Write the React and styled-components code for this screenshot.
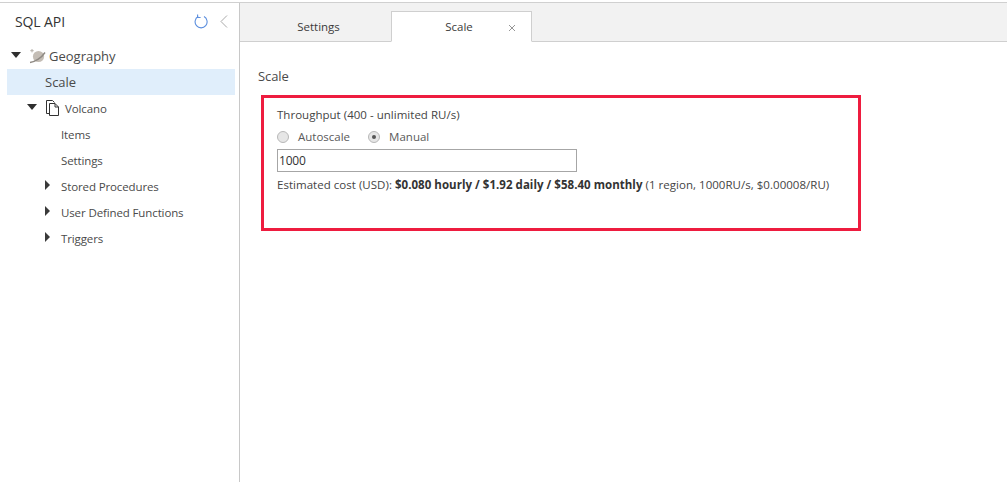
import React from 'react';
import styled, { createGlobalStyle } from 'styled-components';

const GlobalStyle = createGlobalStyle`
  html, body {
    margin: 0;
    padding: 0;
    height: 100%;
    background: #fff;
  }
  body {
    font-family: 'Open Sans', 'Noto Sans', Arial, sans-serif;
    color: #444;
    overflow: hidden;
  }
`;

const Page = styled.div`
  width: 1007px;
  height: 482px;
  box-sizing: border-box;
  padding-top: 2px;
  display: flex;
  background: #fff;
`;

const Frame = styled.div`
  flex: 1;
  display: flex;
  border-top: 1px solid #d0d0d0;
`;

const Sidebar = styled.aside`
  width: 240px;
  flex: none;
  box-sizing: border-box;
  border-right: 1px solid #c8c8c8;
  padding: 0 4px 0 7px;
`;

const SidebarHeader = styled.header`
  height: 39px;
  box-sizing: border-box;
  display: flex;
  align-items: center;
  padding: 0 7px 3px 8px;
`;

const SidebarTitle = styled.h1`
  flex: 1;
  margin: 0;
  font-size: 14px;
  font-weight: 400;
  letter-spacing: -0.1px;
  color: #333;
`;

const HeaderIcon = styled.svg`
  display: block;
  margin-left: ${({ $gap }) => $gap || 0}px;
`;

const Tree = styled.div`
  margin-top: 1px;
  display: flex;
  flex-direction: column;
`;

const TreeRow = styled.div`
  height: 26px;
  display: flex;
  align-items: center;
  padding-left: ${({ $indent }) => $indent}px;
  background: ${({ $selected }) => ($selected ? '#e0eefb' : 'transparent')};
  font-size: ${({ $large }) => ($large ? 13 : 11.5)}px;
  letter-spacing: ${({ $large }) => ($large ? 0 : -0.12)}px;
  color: #4a4a4a;
`;

const Caret = styled.svg`
  flex: none;
  display: block;
  margin-right: ${({ $gap }) => $gap}px;
  margin-bottom: 3px;
`;

const RowIcon = styled.svg`
  flex: none;
  display: block;
  margin-right: ${({ $gap }) => $gap}px;
`;

const Main = styled.main`
  flex: 1;
  min-width: 0;
  display: flex;
  flex-direction: column;
`;

const TabBar = styled.div`
  height: 39px;
  box-sizing: border-box;
  flex: none;
  display: flex;
  align-items: flex-end;
  background: #f2f2f2;
  border-bottom: 1px solid #cfcfcf;
  padding-left: 11px;
`;

const Tab = styled.div`
  position: relative;
  width: ${({ $width }) => $width}px;
  height: 31px;
  box-sizing: border-box;
  display: flex;
  align-items: center;
  justify-content: center;
  padding-right: 5px;
  font-size: 11.5px;
  letter-spacing: 0;
  color: #3a3a3a;
  margin-bottom: -1px;
  ${({ $active }) =>
    $active
      ? `background: #fff;
         border: 1px solid #cfcfcf;
         border-bottom: 1px solid #fff;`
      : ''}
`;

const TabClose = styled.svg`
  position: absolute;
  right: 15px;
  top: 12px;
`;

const Content = styled.section`
  padding: 26px 0 0 18px;
`;

const PaneTitle = styled.h2`
  margin: 0;
  font-size: 13px;
  line-height: 17px;
  font-weight: 400;
  letter-spacing: -0.1px;
  color: #4a4a4a;
`;

const Highlight = styled.div`
  width: 600px;
  height: 136px;
  box-sizing: border-box;
  margin: 10px 0 0 3px;
  border: 3px solid #ee1c3f;
  padding: 9px 13px;
`;

const Label = styled.div`
  font-size: 11.5px;
  line-height: 15px;
  letter-spacing: 0.02px;
  color: #444;
`;

const RadioRow = styled.div`
  display: flex;
  align-items: center;
  height: 15px;
  margin-top: 7px;
  font-size: 11.5px;
  color: #5a5a5a;
`;

const Radio = styled.span`
  width: 12px;
  height: 12px;
  box-sizing: border-box;
  flex: none;
  border-radius: 50%;
  border: 1px solid #b8b8b8;
  background: #e6e6e6;
  display: flex;
  align-items: center;
  justify-content: center;
  margin-right: 9px;
  &::after {
    content: '';
    display: ${({ $checked }) => ($checked ? 'block' : 'none')};
    width: 4px;
    height: 4px;
    border-radius: 50%;
    background: #555;
  }
`;

const RadioText = styled.span`
  margin-right: ${({ $gap }) => $gap || 0}px;
`;

const ThroughputInput = styled.div`
  width: 300px;
  height: 23px;
  box-sizing: border-box;
  margin-top: 5px;
  border: 1px solid #a6a6a6;
  padding-left: 1px;
  font-size: 12px;
  line-height: 21px;
  letter-spacing: -0.2px;
  color: #333;
`;

const Cost = styled.div`
  margin-top: 5px;
  font-size: 11.5px;
  line-height: 15px;
  letter-spacing: 0.03px;
  color: #444;
  white-space: nowrap;
  strong {
    font-weight: 700;
    color: #333;
  }
`;

const CaretDown = ({ gap }) => (
  <Caret $gap={gap} width="10" height="6" viewBox="0 0 10 6">
    <path d="M0 0h10L5 6z" fill="#2f2f2f" />
  </Caret>
);

const CaretRight = () => (
  <Caret $gap={11} width="5" height="10" viewBox="0 0 5 10">
    <path d="M0 0l5 5-5 5z" fill="#3a3a3a" />
  </Caret>
);

const PlanetIcon = () => (
  <RowIcon $gap={3} width="17" height="16" viewBox="0 0 17 16">
    <circle cx="9.5" cy="8.5" r="5.6" fill="#c4bdb5" />
    <path d="M1 14.5C5.5 14 12.5 10 16 4.5" stroke="#8f8a84" strokeWidth="1.4" fill="none" />
    <path d="M3 1v3.4M1.3 2.7h3.4" stroke="#b5b0aa" strokeWidth="1" />
  </RowIcon>
);

const DocsIcon = () => (
  <RowIcon $gap={5} width="14" height="16" viewBox="0 0 14 16">
    <path d="M3.5 13.5H.5V.5h6l2 2" fill="none" stroke="#333" />
    <path d="M3.5 3.5h5.5l3.5 3.5v8.5h-9z" fill="#fff" stroke="#333" />
    <path d="M9 3.5V7h3.5" fill="none" stroke="#333" />
  </RowIcon>
);

export default function App() {
  return (
    <>
      <GlobalStyle />
      <Page>
        <Frame>
          <Sidebar>
            <SidebarHeader>
              <SidebarTitle>SQL API</SidebarTitle>
              <HeaderIcon width="14" height="15" viewBox="0 0 14 15">
                <path
                  d="M4.2 2.6A6 6 0 1 0 10 2.6"
                  fill="none"
                  stroke="#5b8ede"
                  strokeWidth="1.1"
                />
                <path d="M3.6 0.5v3h3" fill="none" stroke="#5b8ede" strokeWidth="1.1" />
              </HeaderIcon>
              <HeaderIcon $gap={12} width="8" height="13" viewBox="0 0 8 13">
                <path d="M7 .5L1 6.5l6 6" fill="none" stroke="#a9a9a9" strokeWidth="1" />
              </HeaderIcon>
            </SidebarHeader>
            <Tree>
              <TreeRow $indent={4} $large>
                <CaretDown gap={8} />
                <PlanetIcon />
                Geography
              </TreeRow>
              <TreeRow $indent={38} $selected $large>Scale</TreeRow>
              <TreeRow $indent={20}>
                <CaretDown gap={9} />
                <DocsIcon />
                Volcano
              </TreeRow>
              <TreeRow $indent={54}>Items</TreeRow>
              <TreeRow $indent={54}>Settings</TreeRow>
              <TreeRow $indent={38}>
                <CaretRight />
                Stored Procedures
              </TreeRow>
              <TreeRow $indent={38}>
                <CaretRight />
                User Defined Functions
              </TreeRow>
              <TreeRow $indent={38}>
                <CaretRight />
                Triggers
              </TreeRow>
            </Tree>
          </Sidebar>
          <Main>
            <TabBar>
              <Tab $width={140}>Settings</Tab>
              <Tab $width={141} $active>
                Scale
                <TabClose width="8" height="8" viewBox="0 0 8 8">
                  <path d="M1 1l6 6M7 1L1 7" stroke="#8a8a8a" strokeWidth="0.9" />
                </TabClose>
              </Tab>
            </TabBar>
            <Content>
              <PaneTitle>Scale</PaneTitle>
              <Highlight>
                <Label>Throughput (400 - unlimited RU/s)</Label>
                <RadioRow>
                  <Radio />
                  <RadioText $gap={18}>Autoscale</RadioText>
                  <Radio $checked />
                  <RadioText>Manual</RadioText>
                </RadioRow>
                <ThroughputInput>1000</ThroughputInput>
                <Cost>
                  Estimated cost (USD): <strong>$0.080 hourly / $1.92 daily / $58.40 monthly</strong>{' '}
                  (1 region, 1000RU/s, $0.00008/RU)
                </Cost>
              </Highlight>
            </Content>
          </Main>
        </Frame>
      </Page>
    </>
  );
}
